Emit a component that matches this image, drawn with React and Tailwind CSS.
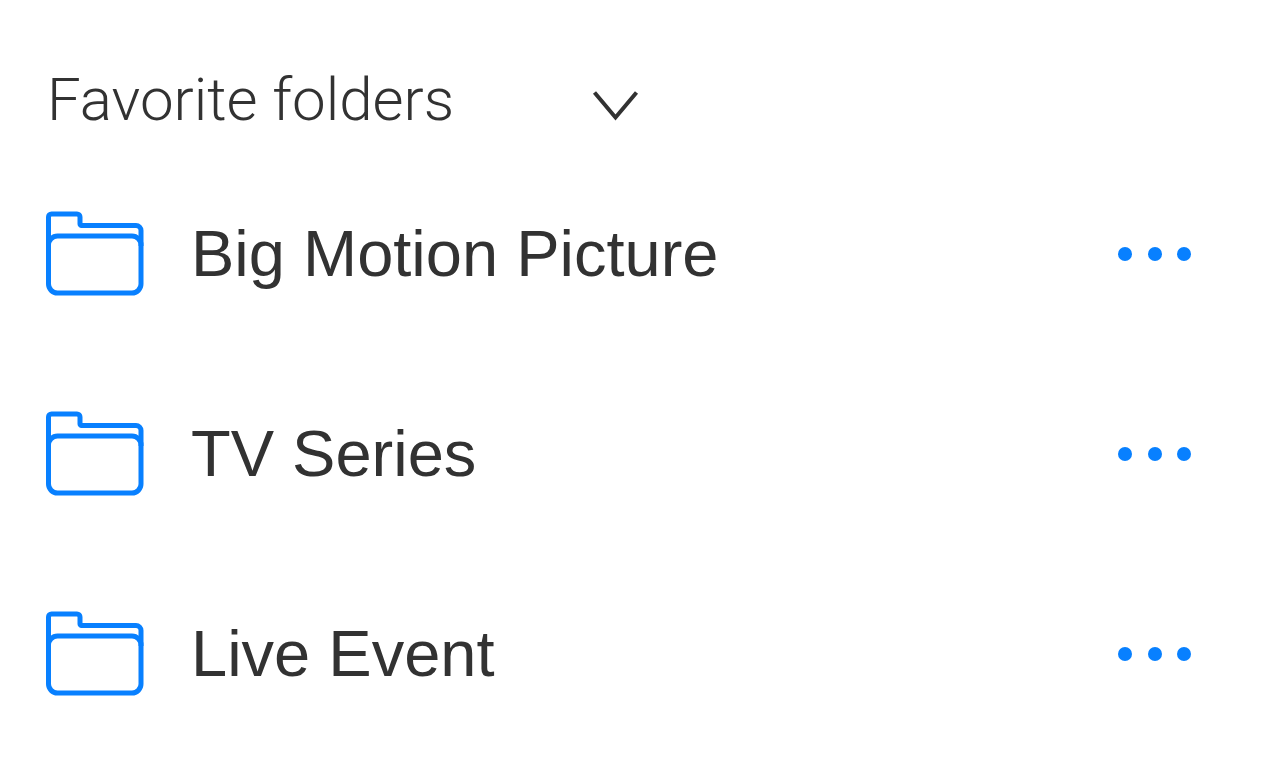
import React from 'react';

const folders = [
  { id: 1, name: 'Big Motion Picture' },
  { id: 2, name: 'TV Series' },
  { id: 3, name: 'Live Event' },
];

function FolderIcon() {
  return (
    <svg width="100" height="88" viewBox="0 0 100 88" fill="none" stroke="#0880ff" strokeWidth="5" className="shrink-0" aria-hidden="true">
      {/* Back sheet with the tab */}
      <path d="M3.5 36V7a3 3 0 0 1 3-3H32a3 3 0 0 1 3 3v7a1.500 1.500 0 0 0 1.500 1.500H91a5 5 0 0 1 5 5V36" />
      {/* Front pocket */}
      <rect x="3.500" y="26" width="92.500" height="57" rx="9" />
    </svg>
  );
}

function FolderRow({ folder }) {
  return (
    <li className="flex h-[200px] items-center">
      <FolderIcon />
      <a href="#" className="ml-[46px] flex-1 text-[65px] leading-[76px] whitespace-nowrap">
        {folder.name}
      </a>
      <button type="button" aria-label={`Options for ${folder.name}`} className="shrink-0 cursor-pointer">
        <svg width="76" height="16" viewBox="0 0 76 16" fill="#0880ff">
          <circle cx="8" cy="8" r="7" />
          <circle cx="38" cy="8" r="7" />
          <circle cx="67" cy="8" r="7" />
        </svg>
      </button>
    </li>
  );
}

export default function App() {
  return (
    <section className="min-h-screen bg-white pt-[60px] pr-20 pl-[45px] font-['Liberation_Sans',Arial,sans-serif] text-[#323232]">
      <header className="flex h-[94px] items-start">
        <h2 className="w-[545px] pl-0.5 font-['Roboto',sans-serif] text-[60px] leading-20 font-light whitespace-nowrap">Favorite folders</h2>
        <button type="button" aria-label="Toggle favorite folders" className="mt-[28px] cursor-pointer">
          <svg width="50" height="36" viewBox="0 0 50 36" fill="none" stroke="#323232" strokeWidth="4">
            <path d="M4.500 4.500L25.500 29.500L46.500 4.500" />
          </svg>
        </button>
      </header>
      <ul>
        {folders.map((folder) => (
          <FolderRow key={folder.id} folder={folder} />
        ))}
      </ul>
    </section>
  );
}
